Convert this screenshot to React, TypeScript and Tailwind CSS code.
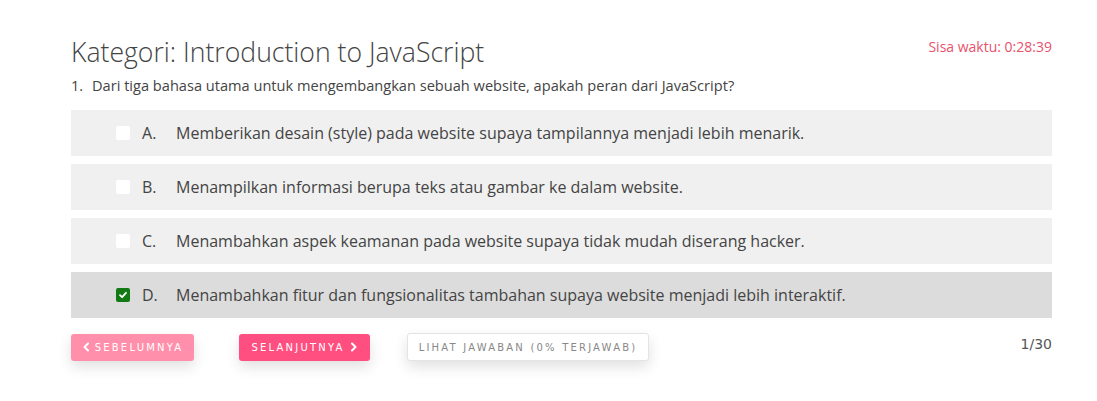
import { useState } from "react";

const OPTIONS = [
  { key: "A", text: "Memberikan desain (style) pada website supaya tampilannya menjadi lebih menarik." },
  { key: "B", text: "Menampilkan informasi berupa teks atau gambar ke dalam website." },
  { key: "C", text: "Menambahkan aspek keamanan pada website supaya tidak mudah diserang hacker." },
  { key: "D", text: "Menambahkan fitur dan fungsionalitas tambahan supaya website menjadi lebih interaktif." },
];

function ChevronLeft() {
  return (
    <svg width="8" height="10" viewBox="0 0 8 10" fill="none">
      <path d="M6 1.5L2.5 5L6 8.5" stroke="currentColor" strokeWidth="2" strokeLinecap="round" strokeLinejoin="round" />
    </svg>
  );
}

function ChevronRight() {
  return (
    <svg width="8" height="10" viewBox="0 0 8 10" fill="none">
      <path d="M2 1.5L5.5 5L2 8.5" stroke="currentColor" strokeWidth="2" strokeLinecap="round" strokeLinejoin="round" />
    </svg>
  );
}

export default function App() {
  const [selected, setSelected] = useState("D");

  return (
    <div className="min-h-[401px] bg-white font-['Open_Sans',sans-serif] text-[#444]">
      <div className="ml-[71px] w-[981px] pt-[36px]">
        <div className="flex items-start justify-between">
          <h1 className="text-[26.6px] leading-[32px] font-light text-[#444]">
            Kategori: Introduction to JavaScript
          </h1>
          <span className="mt-[1px] text-[14px] leading-[20px] text-[#e8526b]">Sisa waktu: 0:28:39</span>
        </div>

        <p className="mt-[7px] flex text-[14.6px] leading-[20px] text-[#444]">
          <span className="w-[21px]">1.</span>
          <span>Dari tiga bahasa utama untuk mengembangkan sebuah website, apakah peran dari JavaScript?</span>
        </p>

        <div className="mt-[15px] flex flex-col gap-[8px]">
          {OPTIONS.map((o) => {
            const active = selected === o.key;
            return (
              <button
                key={o.key}
                onClick={() => setSelected(o.key)}
                className={`flex h-[46px] items-center pl-[45px] text-left text-[16px] text-[#444] ${
                  active ? "bg-[#dcdcdc]" : "bg-[#f0f0f0]"
                }`}
              >
                <span
                  className={`flex h-[14px] w-[14px] items-center justify-center rounded-[2px] ${
                    active ? "bg-[#137a13]" : "bg-white"
                  }`}
                >
                  {active && (
                    <svg width="10" height="10" viewBox="0 0 10 10" fill="none">
                      <path d="M2 5.2L4.1 7.2L8 2.8" stroke="white" strokeWidth="1.8" strokeLinecap="round" strokeLinejoin="round" />
                    </svg>
                  )}
                </span>
                <span className="ml-[12px] w-[34px]">{o.key}.</span>
                <span>{o.text}</span>
              </button>
            );
          })}
        </div>

        <div className="mt-[15px] flex items-start justify-between">
          <div className="flex items-center font-['DejaVu_Sans',sans-serif]">
            <button className="flex h-[27px] w-[123px] items-center justify-center gap-[5px] rounded-[3px] bg-[#ff8fab] text-[10px] tracking-[0.22em] text-white shadow-[0_6px_14px_rgba(0,0,0,0.12)]">
              <ChevronLeft />
              SEBELUMNYA
            </button>
            <button className="ml-[45px] flex h-[27px] w-[131px] items-center justify-center gap-[5px] rounded-[3px] bg-[#ff4f81] text-[10px] tracking-[0.22em] text-white shadow-[0_6px_14px_rgba(0,0,0,0.12)]">
              SELANJUTNYA
              <ChevronRight />
            </button>
            <button className="ml-[37px] flex h-[28px] w-[242px] items-center justify-center rounded-[3px] border border-[#e4e4e4] bg-white text-[10px] tracking-[0.22em] text-[#888] shadow-[0_6px_14px_rgba(0,0,0,0.12)]">
              LIHAT JAWABAN (0% TERJAWAB)
            </button>
          </div>
          <span className="mt-[1px] font-['DejaVu_Sans',sans-serif] text-[14px] leading-[20px] text-[#555]">1/30</span>
        </div>
      </div>
    </div>
  );
}
